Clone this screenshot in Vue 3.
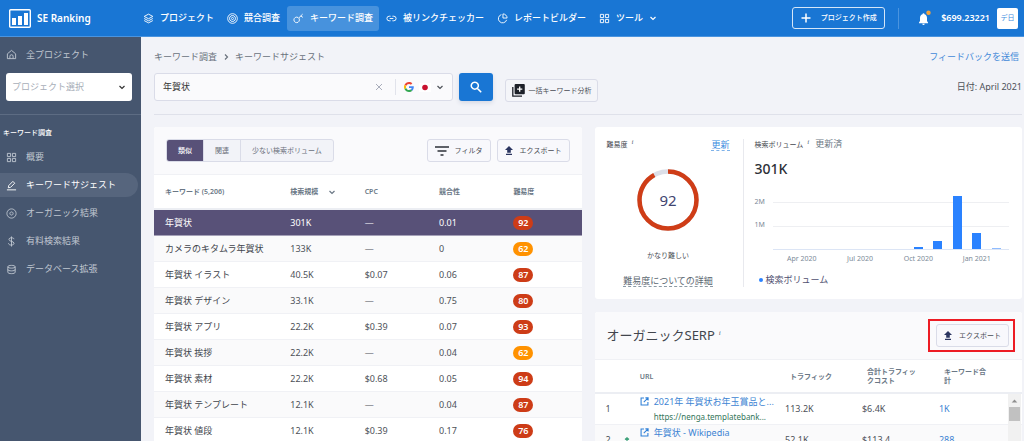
<script setup>
import { ref } from 'vue'

const query = ref('年賀状')
const segment = ref('類似')
const segments = ['類似', '関連', '少ない検索ボリューム']

const navItems = [
  { label: 'プロジェクト', icon: 'layers' },
  { label: '競合調査', icon: 'target' },
  { label: 'キーワード調査', icon: 'key', active: true },
  { label: '被リンクチェッカー', icon: 'link' },
  { label: 'レポートビルダー', icon: 'pie' },
  { label: 'ツール', icon: 'grid', menu: true },
]

const sideItems = [
  { label: '概要', icon: 'grid' },
  { label: 'キーワードサジェスト', icon: 'pencil', active: true },
  { label: 'オーガニック結果', icon: 'disc' },
  { label: '有料検索結果', icon: 'dollar' },
  { label: 'データベース拡張', icon: 'database' },
]

const icons = {
  layers: 'M12 2.5 21.5 7.5 12 12.5 2.5 7.5Z M2.5 12 12 17 21.5 12 M2.5 16.5 12 21.5 21.5 16.5',
  target: 'M12 1.5a10.5 10.5 0 1 0 .01 0Z M12 5.5a6.5 6.5 0 1 0 .01 0Z M12 9.5a2.5 2.5 0 1 0 .01 0Z',
  key: 'M8 9a6 6 0 1 0 .01 0Z M12.5 11 21 2.5 M17 6.500l4.500 3',
  link: 'M10 7H7a5 5 0 0 0 0 10h3 M14 7h3a5 5 0 0 1 0 10h-3 M8 12h8',
  pie: 'M9.500 3.500a9.200 9.200 0 1 0 11.500 11.500 M13 2a9 9 0 0 1 9 9h-9Z',
  grid: 'M3 3h7v7H3Z M14 3h7v7h-7Z M3 14h7v7H3Z M14 14h7v7h-7Z',
  home: 'M3 10.500 12 3l9 7.500V21H3Z M8.500 21v-5a3.500 3.500 0 0 1 7 0v5',
  pencil: 'M5 17l1-5L15 3l4 4-9 9Z M2 21.500h20',
  disc: 'M12 2a10 10 0 1 0 .01 0Z M12 8.500a3.500 3.500 0 1 0 .01 0Z',
  dollar: 'M12 1v22 M17.500 7c0-4-11-4.500-11 .500 0 5.500 11 3 11 8.500 0 5-12 5-12 0',
  database: 'M4 6c0-4 16-4 16 0s-16 4-16 0Z M4 6v12c0 4 16 4 16 0V6 M4 12c0 4 16 4 16 0',
}

const keywords = [
  ['年賀状', '301K', '—', '0.01', 92],
  ['カメラのキタムラ年賀状', '133K', '—', '0', 62],
  ['年賀状 イラスト', '40.5K', '$0.07', '0.06', 87],
  ['年賀状 デザイン', '33.1K', '—', '0.75', 80],
  ['年賀状 アプリ', '22.2K', '$0.39', '0.07', 93],
  ['年賀状 挨拶', '22.2K', '—', '0.04', 62],
  ['年賀状 素材', '22.2K', '$0.68', '0.05', 94],
  ['年賀状 テンプレート', '12.1K', '—', '0.04', 87],
  ['年賀状 値段', '12.1K', '$0.39', '0.17', 76],
]

const months = [
  { v: 0 },
  { v: 0, label: 'Apr 2020' },
  { v: 0 },
  { v: 0 },
  { v: 0, label: 'Jul 2020' },
  { v: 0 },
  { v: 0 },
  { v: 0.09, label: 'Oct 2020' },
  { v: 0.34 },
  { v: 2.2 },
  { v: 0.66, label: 'Jan 2021' },
  { v: 0.06 },
]

const serp = [
  { n: 1, title: '2021年 年賀状お年玉賞品と...', url: 'https://nenga.templatebank...', traffic: '113.2K', cost: '$6.4K', kw: '1K' },
  { n: 2, up: true, title: '年賀状 - Wikipedia', url: 'https://ja.wikipedia.org/wi...', traffic: '52.1K', cost: '$113.4', kw: '288' },
]
</script>

<template>
  <div class="page">
    <header class="topbar">
      <a class="brand" href="#">
        <svg class="logo" viewBox="0 0 22 19" aria-hidden="true">
          <rect x="0.700" y="0.700" width="20.600" height="17.600" rx="1" fill="none" stroke="currentColor" stroke-width="1.400" />
          <path fill="currentColor" d="M3 9h4v7H3ZM9 7h4v9H9ZM15 4h4v12h-4Z" />
        </svg>
        <span>SE Ranking</span>
      </a>
      <nav class="nav">
        <a v-for="n in navItems" :key="n.label" href="#" :class="{ active: n.active }">
          <svg class="line" viewBox="0 0 24 24" aria-hidden="true"><path :d="icons[n.icon]" /></svg>
          <span>{{ n.label }}</span>
          <svg v-if="n.menu" class="chev" viewBox="0 0 8 8" aria-hidden="true"><path d="M1.500 3 4 5.500 6.500 3" /></svg>
        </a>
      </nav>
      <div class="account">
        <button class="create" type="button">
          <svg viewBox="0 0 10 10" aria-hidden="true"><path d="M5 .5v9M.5 5h9" stroke="currentColor" stroke-width="1.500" /></svg>
          <span>プロジェクト作成</span>
        </button>
        <span class="rule"></span>
        <button class="bell" type="button" aria-label="通知">
          <svg viewBox="0 0 14 16" aria-hidden="true">
            <path fill="currentColor" d="M5.500 4.200a1 1 0 0 1 2 0C9.300 4.700 10 6.300 10 8v3l1 1.500v.7H2v-.7L3 11V8c0-1.700.7-3.300 2.500-3.800ZM5.300 13.800h2.400a1.200 1.200 0 0 1-2.400 0Z" />
            <circle cx="11.500" cy="2.800" r="2.200" fill="#f5a33b" />
          </svg>
        </button>
        <span class="balance">$699.23221</span>
        <button class="avatar" type="button">デ日</button>
      </div>
    </header>

    <div class="body">
      <aside class="side">
        <a class="home" href="#">
          <svg class="line" viewBox="0 0 24 24" aria-hidden="true"><path :d="icons.home" /></svg>
          <span>全プロジェクト</span>
        </a>
        <div class="project">
          <select aria-label="プロジェクト選択">
            <option>プロジェクト選択</option>
          </select>
          <svg class="chev" viewBox="0 0 8 8" aria-hidden="true"><path d="M1.500 3 4 5.500 6.500 3" /></svg>
        </div>
        <h2>キーワード調査</h2>
        <nav class="menu">
          <a v-for="s in sideItems" :key="s.label" href="#" :class="{ active: s.active }">
            <svg class="line" viewBox="0 0 24 24" aria-hidden="true"><path :d="icons[s.icon]" /></svg>
            <span>{{ s.label }}</span>
          </a>
        </nav>
      </aside>

      <main class="main">
        <div class="crumbs">
          <a href="#">キーワード調査</a>
          <svg class="chev" viewBox="0 0 8 8" aria-hidden="true"><path d="M3 1.500 5.500 4 3 6.500" /></svg>
          <span>キーワードサジェスト</span>
          <a class="feedback" href="#">フィードバックを送信</a>
        </div>

        <form class="search" @submit.prevent>
          <div class="field">
            <input v-model="query" type="text" aria-label="キーワード" />
            <button class="clear" type="button" aria-label="クリア" @click="query = ''">
              <svg viewBox="0 0 8 8" aria-hidden="true"><path d="M1 1l6 6M7 1 1 7" stroke="currentColor" /></svg>
            </button>
            <button class="engine" type="button" aria-label="Google 日本">
              <svg class="google" viewBox="0 0 48 48" aria-hidden="true">
                <path fill="#ea4335" d="M24 9.500c3.500 0 6.700 1.200 9.200 3.600l6.900-6.900C35.900 2.400 30.500 0 24 0 14.600 0 6.500 5.400 2.600 13.200l8 6.200C12.400 13.700 17.700 9.500 24 9.500Z" />
                <path fill="#4285f4" d="M47 24.500c0-1.600-.2-3.100-.4-4.500H24v9h12.900c-.6 3-2.200 5.500-4.700 7.200l7.700 6C44.400 38 47 31.800 47 24.500Z" />
                <path fill="#fbbc05" d="M10.500 28.600A14.500 14.500 0 0 1 10.500 19.400l-8-6.200a24 24 0 0 0 0 21.600Z" />
                <path fill="#34a853" d="M24 48c6.500 0 11.900-2.100 15.900-5.800l-7.700-6c-2.200 1.400-4.900 2.300-8.200 2.300-6.300 0-11.600-4.200-13.500-9.900l-8 6.200C6.500 42.600 14.600 48 24 48Z" />
              </svg>
              <svg class="flag" viewBox="0 0 12 9" aria-hidden="true"><rect width="12" height="9" fill="#fff" /><circle cx="6" cy="4.500" r="2.800" fill="#c8102e" /></svg>
              <svg class="chev" viewBox="0 0 8 8" aria-hidden="true"><path d="M1.500 3 4 5.500 6.500 3" /></svg>
            </button>
          </div>
          <button class="go" type="submit" aria-label="検索">
            <svg viewBox="0 0 12 12" aria-hidden="true"><path d="M4.800 1.200a3.500 3.500 0 1 0 .01 0ZM7.400 7.400l3.800 3.800" fill="none" stroke="currentColor" stroke-width="1.500" /></svg>
          </button>
          <button class="btn bulk" type="button">
            <svg viewBox="0 0 13 13" aria-hidden="true">
              <path d="M.8 3v9.200H10" fill="none" stroke="#1d2129" stroke-width="1.300" />
              <rect x="2.600" width="10.200" height="10.200" rx="1" fill="#1d2129" />
              <path d="M7.700 2.500v5.200M5.100 5.100h5.200" stroke="#fff" stroke-width="1.300" />
            </svg>
            <span>一括キーワード分析</span>
          </button>
          <span class="date">日付: April 2021</span>
        </form>

        <div class="columns">
          <section class="card keywords">
            <div class="tools">
              <div class="segments">
                <button v-for="s in segments" :key="s" type="button" :class="{ on: segment === s }" @click="segment = s">{{ s }}</button>
              </div>
              <button class="btn filter" type="button">
                <svg viewBox="0 0 14 10" aria-hidden="true"><path d="M0 1h14M2.500 5h9M5.500 9h3" stroke="#2d3138" stroke-width="1.500" /></svg>
                <span>フィルタ</span>
              </button>
              <button class="btn export" type="button">
                <svg viewBox="0 0 8 9" aria-hidden="true"><path fill="#2b3560" d="M4 0 8 4H5.800v2.800H2.200V4H0ZM1 7.700h6V9H1Z" /></svg>
                <span>エクスポート</span>
              </button>
            </div>
            <table>
              <colgroup><col class="c-key" /><col class="c-num" /><col class="c-num" /><col class="c-num" /><col /></colgroup>
              <thead>
                <tr>
                  <th>キーワード (5,206)</th>
                  <th><span class="sort">検索規模 <svg class="chev" viewBox="0 0 8 8" aria-hidden="true"><path d="M1.500 3 4 5.500 6.500 3" /></svg></span></th>
                  <th>CPC</th>
                  <th>競合性</th>
                  <th>難易度</th>
                </tr>
              </thead>
              <tbody>
                <tr v-for="k in keywords" :key="k[0]">
                  <td class="name">{{ k[0] }}</td>
                  <td>{{ k[1] }}</td>
                  <td>{{ k[2] }}</td>
                  <td>{{ k[3] }}</td>
                  <td><span class="score" :class="{ mid: k[4] < 70 }">{{ k[4] }}</span></td>
                </tr>
              </tbody>
            </table>
          </section>

          <div class="right">
            <section class="card stats">
              <div class="difficulty">
                <div class="row">
                  <span class="cap">難易度<sup>i</sup></span>
                  <a class="dashed blue" href="#">更新</a>
                </div>
                <div class="ring">
                  <svg viewBox="0 0 62 62" aria-hidden="true">
                    <circle cx="31" cy="31" r="28.500" fill="none" stroke="#dcdfe8" stroke-width="4.500" />
                    <circle cx="31" cy="31" r="28.500" fill="none" stroke="#cf3d17" stroke-width="4.500" pathLength="100" stroke-dasharray="92 8" transform="rotate(-90 31 31)" />
                  </svg>
                  <span>92</span>
                </div>
                <p>かなり難しい</p>
                <a class="dashed" href="#">難易度についての詳細</a>
              </div>
              <div class="volume">
                <div class="row"><span class="cap">検索ボリューム<sup>i</sup></span><span class="updated">更新済</span></div>
                <strong>301K</strong>
                <div class="chart">
                  <div class="axis"><span>2M</span><span>1M</span></div>
                  <div class="plot">
                    <div v-for="(m, i) in months" :key="i" class="slot">
                      <div class="bar" :class="{ faint: m.v < 0.08 }" :style="{ height: m.v * 24 + 'px' }"></div>
                      <span v-if="m.label" class="tick">{{ m.label }}</span>
                    </div>
                  </div>
                </div>
                <div class="legend"><i></i>検索ボリューム</div>
              </div>
            </section>

            <section class="card serp">
              <div class="serp-head">
                <h1>オーガニックSERP<sup>i</sup></h1>
                <div class="marked">
                  <button class="btn export" type="button">
                    <svg viewBox="0 0 8 9" aria-hidden="true"><path fill="#2b3560" d="M4 0 8 4H5.800v2.800H2.200V4H0ZM1 7.700h6V9H1Z" /></svg>
                    <span>エクスポート</span>
                  </button>
                </div>
              </div>
              <div class="serp-table">
                <table>
                  <colgroup><col class="s-n" /><col class="s-url" /><col class="s-num" /><col class="s-num" /><col /></colgroup>
                  <thead>
                    <tr><th></th><th class="url-h">URL</th><th>トラフィック</th><th>合計トラフィックコスト</th><th class="last">キーワード合計</th></tr>
                  </thead>
                  <tbody>
                    <tr v-for="s in serp" :key="s.n">
                      <td><span class="rank">{{ s.n }}<svg v-if="s.up" viewBox="0 0 6 6" aria-hidden="true"><path d="M1 2.500 3 .8 5 2.500M3 1v5" fill="none" stroke="#3fa27a" stroke-width="1.200" /></svg></span></td>
                      <td>
                        <div class="site">
                          <svg viewBox="0 0 10 10" aria-hidden="true"><path d="M4.500 1.200H1.200v7.600h7.600V5.500M6 1h3v3M9 1 4.200 5.800" fill="none" stroke="#2f80d8" stroke-width="1.200" /></svg>
                          <a href="#">{{ s.title }}</a>
                          <span>{{ s.url }}</span>
                        </div>
                      </td>
                      <td>{{ s.traffic }}</td>
                      <td>{{ s.cost }}</td>
                      <td><a href="#">{{ s.kw }}</a></td>
                    </tr>
                  </tbody>
                </table>
                <div class="scroll"><svg viewBox="0 0 8 5" aria-hidden="true"><path d="M4 .5 7.500 4.500h-7Z" fill="#8f8f8f" /></svg><b></b></div>
              </div>
            </section>
          </div>
        </div>
      </main>
    </div>
  </div>
</template>

<style>
body { margin: 0; overflow: hidden; }
</style>

<style scoped>
.page {
  height: 100vh;
  display: flex;
  flex-direction: column;
  overflow: hidden;
  background: #f2f3f8;
  color: #4d5158;
  font: 9px/12px "Noto Sans", "Noto Sans CJK JP", sans-serif;
}
.page * { box-sizing: border-box; }
a { color: inherit; text-decoration: none; }
button, input, select { font: inherit; color: inherit; margin: 0; padding: 0; border: 0; background: none; }
button { cursor: pointer; white-space: nowrap; }
svg { display: block; flex: none; }
.line { width: 11px; height: 11px; fill: none; stroke: currentColor; stroke-width: 2; }
.chev { width: 8px; height: 8px; fill: none; stroke: currentColor; stroke-width: 1.2; }

.topbar { flex: none; height: 37px; display: flex; align-items: center; background: #1976d4; border-bottom: 1px solid #4a94df; color: #fff; white-space: nowrap; }
.brand { width: 128px; margin-left: 9px; display: flex; align-items: center; gap: 6px; font-size: 10px; font-weight: 600; }
.logo { width: 22px; height: 19px; }
.nav { display: flex; gap: 1px; font-weight: 500; }
.nav a { height: 25px; padding: 0 6px; display: flex; align-items: center; gap: 6px; border-radius: 3px; }
.nav .active { background: #4792dd; }
.account { margin-left: auto; padding-right: 6px; display: flex; align-items: center; }
.create { width: 93px; height: 22px; display: flex; align-items: center; justify-content: center; gap: 10px; border: 1px solid #d5e6f8; border-radius: 3px; font-size: 7px; font-weight: 500; }
.create svg { width: 10px; height: 10px; }
.rule { width: 1px; height: 21px; margin: 0 18px 0 13px; background: #4a94df; }
.bell svg { width: 14px; height: 16px; }
.balance { margin: 0 7px 0 10px; font-weight: 600; }
.avatar { width: 21px; height: 21px; border-radius: 2px; background: #fff; color: #3f8de0; font-size: 7px; }

.body { flex: 1; min-height: 0; display: flex; }
.side { flex: none; width: 141px; padding-top: 12px; background: #46566f; color: #c0c7d1; white-space: nowrap; }
.home { display: flex; gap: 9px; padding-left: 6px; line-height: 12px; }
.project { position: relative; height: 28px; margin: 12px 9px 13px 6px; border-radius: 3px; background: #fff; }
.project select { width: 100%; height: 28px; padding: 0 20px 0 6px; appearance: none; color: #a8aeb8; }
.project .chev { position: absolute; right: 6px; top: 10px; color: #333; pointer-events: none; }
.side h2 { margin: 0; padding: 12px 0 6px 3px; border-top: 1px solid #5d6c83; font-size: 7px; line-height: 12px; font-weight: 500; color: #fff; }
.menu a { height: 24px; margin: 0 3px 4px 0; padding-left: 6px; display: flex; align-items: center; gap: 9px; border-radius: 0 12px 12px 0; }
.menu .active { background: #56657d; color: #fff; }

.main { flex: 1; min-width: 0; padding: 0 2px 0 13px; }
.crumbs { height: 36px; padding: 4px 3px 0 0; display: flex; align-items: center; gap: 5px; line-height: 12px; color: #69717c; }
.crumbs .feedback { margin-left: auto; color: #4389d8; }
.search { height: 42px; display: flex; padding-bottom: 13px; border-bottom: 1px solid #dfe1ea; }
.field { width: 299px; display: flex; border: 1px solid #dadce8; border-radius: 3px; background: #fafafc; }
.field input { flex: 1; min-width: 0; padding: 0 8px; color: #333; outline: 0; }
.clear { width: 14px; margin-right: 6px; color: #a9adbb; }
.clear svg { width: 8px; height: 8px; }
.engine { margin: 5px 0; padding: 0 8px; display: flex; align-items: center; gap: 5px; border-left: 1px solid #e1e3eb; }
.google { width: 10px; height: 10px; }
.flag { width: 12px; height: 9px; }
.go { width: 34px; margin-left: 6px; display: grid; place-items: center; border-radius: 3px; background: #1976d4; color: #fff; box-shadow: 0 2px 4px #d5d9e4; }
.go svg { width: 12px; height: 12px; }
.btn { height: 23px; display: flex; align-items: center; justify-content: center; border: 1px solid #dadce8; border-radius: 3px; background: #f8f8fc; color: #484c54; font-size: 7px; }
.bulk { width: 93px; margin: 6px 0 0 12px; gap: 4px; background: #f4f5f9; }
.bulk svg { width: 13px; height: 13px; }
.date { margin: 8px 0 0 auto; white-space: nowrap; }

.columns { padding-top: 12px; display: grid; grid-template-columns: minmax(0, 1fr) minmax(0, 1fr); gap: 13px; align-items: start; }
.card { border-radius: 3px; background: #fff; overflow: hidden; }
.tools { height: 48px; padding: 12px 12px 0; display: flex; align-items: flex-start; background: #fafafc; border-bottom: 1px solid #f0f1f5; }
.segments { display: flex; height: 23px; margin-right: auto; border: 1px solid #dadce8; border-radius: 3px; background: #f2f3f8; overflow: hidden; font-size: 7px; color: #6a707b; }
.segments button { padding: 0 11px; border-left: 1px solid #dadce8; }
.segments .on { border-left: 0; background: #585178; color: #fff; font-weight: 500; }
.filter { width: 64px; gap: 6px; margin-right: 6px; }
.filter svg { width: 14px; height: 10px; }
.export { width: 73px; gap: 7px; }
.export svg { width: 8px; height: 9px; }
table { width: 100%; border-collapse: separate; border-spacing: 0; table-layout: fixed; }
th { text-align: left; font-size: 7px; font-weight: 600; color: #6a7785; }
th, td { padding: 0 0 0 11px; white-space: nowrap; }
.keywords thead th { height: 35px; border-bottom: 2px solid #eceef3; }
.c-key { width: 29.3%; }
.c-num { width: 17.4%; }
.sort { display: flex; align-items: center; gap: 10px; }
.keywords td { height: 26px; border-bottom: 1px solid #f0f1f5; }
.keywords .name { color: #41454c; }
.keywords tbody tr:nth-child(even) td { background: #fafafb; }
.keywords tbody tr:first-child td { background: #585178; color: #fff; border-color: #a5a1b8; }
.score { display: block; width: 20px; height: 14px; border-radius: 7px; background: #cd3c17; color: #fff; font-weight: 600; line-height: 14px; text-align: center; }
.score.mid { background: #ff9200; }

.stats { height: 172px; padding: 12px 0; display: flex; margin-bottom: 13px; }
.difficulty { width: 149px; padding: 0 13px 0 12px; display: flex; flex-direction: column; align-items: center; border-right: 1px solid #e8e9ee; }
.row { width: 100%; display: flex; justify-content: space-between; height: 12px; line-height: 10px; }
.cap { font-size: 7px; color: #43474e; }
sup { margin-left: 4px; font: italic 7px/1 "Liberation Serif", serif; color: #526374; vertical-align: 3px; }
.dashed { border-bottom: 1px dashed #8b9aa5; color: #5c6872; line-height: 11px; }
.blue { height: 12px; color: #3b8ce0; border-color: #7eb2ea; }
.ring { position: relative; margin: 18px 0 19px; }
.ring svg { width: 62px; height: 62px; }
.ring span { position: absolute; inset: 0; display: grid; place-items: center; color: #3f4570; font-size: 15px; }
.difficulty p { margin: 0 0 13px; font-size: 7px; line-height: 12px; }
.volume { flex: 1; min-width: 0; padding: 0 13px 0 11px; }
.volume .row { justify-content: flex-start; gap: 6px; }
.updated { color: #6d7985; }
.volume strong { display: block; margin-top: 8px; font-size: 14px; line-height: 20px; font-weight: 500; color: #2d3037; }
.chart { margin-top: 23px; display: flex; height: 48px; font-size: 7px; color: #7b8a98; }
.axis { width: 18px; }
.axis span { display: block; height: 23px; line-height: 0; }
.plot { flex: 1; display: flex; align-items: flex-end; padding-right: 3px; border-bottom: 1px solid #dce5f5; background: linear-gradient(#eeeff2, #eeeff2) 0 0 / 100% 1px no-repeat, linear-gradient(#eeeff2, #eeeff2) 0 24px / 100% 1px no-repeat; }
.slot { position: relative; flex: 1; display: flex; justify-content: center; }
.bar { width: 9px; background: #2a82ff; }
.faint { background: #8fbcff; }
.tick { position: absolute; top: 100%; padding-top: 5px; line-height: 10px; white-space: nowrap; }
.legend { margin: 24px 0 0 4px; display: flex; align-items: center; gap: 3px; line-height: 12px; color: #504f70; }
.legend i { width: 4px; height: 4px; border-radius: 2px; background: #2a82ff; }

.serp-head { height: 48px; padding: 12px 13px 0 12px; display: flex; align-items: flex-start; justify-content: space-between; background: #fafafc; border-bottom: 1px solid #f0f1f5; }
h1 { margin: 0; font-size: 13px; line-height: 23px; font-weight: 400; color: #42464d; }
h1 sup { vertical-align: 5px; }
.marked { position: relative; }
.marked::after { content: ""; position: absolute; inset: -5px -6px -5px -8px; border: 2px solid #ed1c24; pointer-events: none; }
.serp-table { position: relative; }
.serp th { height: 34px; padding: 0 8px 0 16px; white-space: normal; word-break: break-all; line-height: 9px; border-bottom: 2px solid #eceef3; }
.serp th.url-h { padding-left: 11px; }
.serp th.last { padding-right: 34px; }
.serp td { height: 31px; border-bottom: 1px solid #f0f1f5; }
.serp tbody tr:nth-child(even) td { background: #fafafb; }
.serp td a { color: #3d84d3; }
.s-n { width: 8%; }
.s-url { width: 34%; }
.s-num { width: 18%; }
.rank { display: flex; align-items: center; gap: 13px; }
.rank svg { width: 6px; height: 6px; }
.site { display: grid; grid-template-columns: 10px 1fr; column-gap: 4px; line-height: 15px; }
.site svg { width: 9px; height: 9px; align-self: center; }
.site span { grid-column: 2; font-size: 8px; color: #33765a; }
.scroll { position: absolute; right: 1px; top: 34px; bottom: 0; width: 13px; background: #f1f1f1; }
.scroll svg { width: 7px; height: 4px; margin: 5px auto 4px; }
.scroll b { display: block; height: 14px; margin: 0 1px; background: #c1c1c1; }
</style>
